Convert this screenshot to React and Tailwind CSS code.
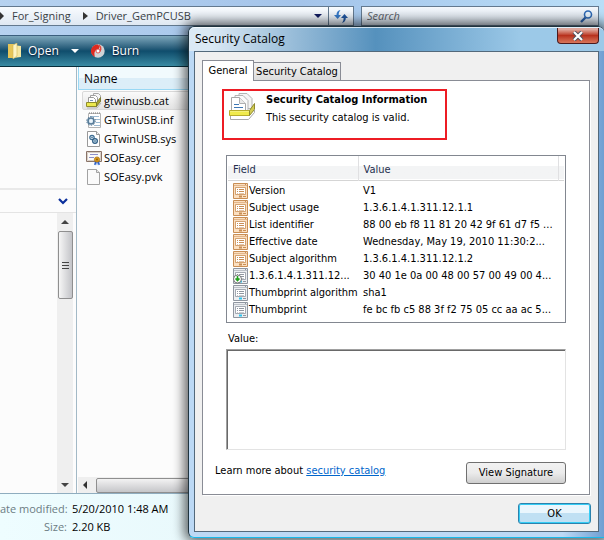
import React from "react";

const SEGOE = "font-['Open_Sans','Noto_Sans',sans-serif]";
const TAHOMA = "font-['DejaVu_Sans_Condensed','DejaVu_Sans',sans-serif]";

function CatalogIcon({ className }) {
  return (
    <svg viewBox="0 0 28 30" className={className} aria-hidden="true">
      <path d="M10 2.500h8l5 5v10H10z" fill="#f4f4f4" stroke="#b4b4b4" />
      <path d="M6 4.500h8l5 5v10H6z" fill="#fafafa" stroke="#b4b4b4" />
      <path d="M2.500 6.500h8l6 6v12h-14z" fill="#fff" stroke="#a8a8a8" />
      <path d="M10.500 6.500v6h6" fill="#e9e9e9" stroke="#b0b0b0" />
      <path d="M5 13.500h5M5 16.500h9" stroke="#3f78b5" />
      <path d="M.500 19.500h20v5H.500z" fill="#f4f07a" stroke="#b7ad2c" />
      <path d="M20.500 19.500l5-7v6l-5 6z" fill="#d2cb52" stroke="#8f8a2c" />
      <path d="M1 21h19v3H1z" fill="#f0ea4c" />
      <path d="M1.500 25v3.500h18l6-7v-3" fill="none" stroke="#a9a9a9" />
    </svg>
  );
}

function SmallCatalogIcon() {
  return (
    <svg viewBox="0 0 16 16" className="h-4 w-4" aria-hidden="true">
      <path d="M7.500.500h5l2 2v6h-7z" fill="#f6f6f6" stroke="#a8a8a8" />
      <path d="M4.500 2.500h5l2 2v6h-7z" fill="#fff" stroke="#a0a0a0" />
      <path d="M2.500 4.500h5l2 2v6h-7z" fill="#fff" stroke="#999" />
      <path d="M4 7.500h3" stroke="#7794b5" />
      <path d="M.500 9.500h10v4H.500z" fill="#ece94e" stroke="#8e8b2a" />
      <path d="M10.500 9.500l4-5v4l-4 5z" fill="#a5a22f" stroke="#77752a" strokeWidth=".8" />
      <path d="M1 15h10l4-5" fill="none" stroke="#b5b5b5" />
    </svg>
  );
}

function InfIcon() {
  return (
    <svg viewBox="0 0 16 16" className="h-4 w-4" aria-hidden="true">
      <path d="M2.500 1.500h12v14h-12z" fill="#fff" stroke="#b5b5b5" />
      <path d="M3 1h11" stroke="#777" strokeDasharray="1 1" />
      <path d="M4 4.500h9M9 7.500h5M10 10.500h4M8 13.500h6" stroke="#9dbbd3" />
      <circle cx="5" cy="9" r="3" fill="#dcebf5" stroke="#557a98" strokeWidth="1.600" />
      <circle cx="5" cy="9" r="4.300" fill="none" stroke="#557a98" strokeDasharray="1.400 1.300" />
      <circle cx="5" cy="9" r="1" fill="#f4f9fc" />
    </svg>
  );
}

function SysIcon() {
  return (
    <svg viewBox="0 0 16 16" className="h-4 w-4" aria-hidden="true">
      <path d="M1.500.500h9l3 3v12h-12z" fill="#fff" stroke="#999" />
      <path d="M10.500.500v3h3" fill="#eee" stroke="#999" />
      <circle cx="6" cy="6.500" r="2.200" fill="#d7e8f3" stroke="#3e6d92" strokeWidth="1.200" />
      <circle cx="9" cy="10" r="2.400" fill="#c3dbea" stroke="#315f85" strokeWidth="1.200" />
      <circle cx="6" cy="6.500" r=".8" fill="#3e6d92" />
      <circle cx="9" cy="10" r=".8" fill="#315f85" />
    </svg>
  );
}

function CerIcon() {
  return (
    <svg viewBox="0 0 16 16" className="h-4 w-4" aria-hidden="true">
      <path d="M.500 1.500h15v10H.500z" fill="#fff" stroke="#8a7468" />
      <path d="M1.500 2.500h13v8h-13z" fill="#fbfaf8" stroke="#d8cfc7" />
      <path d="M4 4.500h8M3 7.500h5" stroke="#8d8fc9" />
      <path d="M9 11l-1 4 1.500-.5.500 1 1-4 1 4 .5-1 1.500.5-1-4z" fill="#2d62c9" />
      <circle cx="11" cy="9.500" r="2.600" fill="#d99a1c" stroke="#a86c08" strokeWidth=".7" />
      <circle cx="11" cy="9.500" r=".9" fill="#8d5900" />
    </svg>
  );
}

function PlainIcon() {
  return (
    <svg viewBox="0 0 16 16" className="h-4 w-4" aria-hidden="true">
      <path d="M1.500.500h9l3 3v12h-12z" fill="#fafafa" stroke="#a2a2a2" />
      <path d="M10.500.500v3h3" fill="#e6e6e6" stroke="#a2a2a2" />
    </svg>
  );
}

function FieldIcon({ kind }) {
  const tan = kind === "v1";
  const line = tan ? "#c98e55" : "#9096a0";
  const pale = tan ? "#fbdfc0" : "#eceef1";
  return (
    <svg viewBox="0 0 15 16" className="h-4 w-[15px] shrink-0" aria-hidden="true">
      <path d="M.500.500h14v15H.500z" fill={pale} stroke={line} />
      <path d="M1 2.500h13" stroke={line} strokeOpacity=".5" />
      <path d="M12 1.500h1" stroke={line} />
      <path d="M2.500 4.500h10v7h-10z" fill="#fff" stroke={line} strokeOpacity=".8" />
      <path d="M4 6.500h1M6 6.500h5M4 8.500h1M6 8.500h5" stroke={line} />
      <path d="M4 10.500h1M6 10.500h5" stroke={line} strokeOpacity=".5" />
      <path d="M6 13.500h3" stroke={tan ? line : "#2cc4ee"} strokeWidth="2" />
      <path d="M10 13.500h3" stroke={line} />
      {kind === "ext" && (
        <g>
          <circle cx="4.500" cy="11" r="4" fill="#fff" stroke="#777" />
          <path d="M4.500 8v4.500M2.500 10.500l2 2 2-2" fill="none" stroke="#24a01e" strokeWidth="1.600" />
        </g>
      )}
    </svg>
  );
}

const files = [
  ["gtwinusb.cat", SmallCatalogIcon],
  ["GTwinUSB.inf", InfIcon],
  ["GTwinUSB.sys", SysIcon],
  ["SOEasy.cer", CerIcon],
  ["SOEasy.pvk", PlainIcon],
];

const fields = [
  ["v1", "Version", "V1"],
  ["v1", "Subject usage", "1.3.6.1.4.1.311.12.1.1"],
  ["v1", "List identifier", "88 00 eb f8 11 81 20 42 9f 61 d7 f5 ..."],
  ["v1", "Effective date", "Wednesday, May 19, 2010 11:30:2..."],
  ["v1", "Subject algorithm", "1.3.6.1.4.1.311.12.1.2"],
  ["ext", "1.3.6.1.4.1.311.12...", "30 40 1e 0a 00 48 00 57 00 49 00 4..."],
  ["prop", "Thumbprint algorithm", "sha1"],
  ["prop", "Thumbprint", "fe bc fb c5 88 3f f2 75 05 cc aa ac 5..."],
];

function AddressRow() {
  return (
    <div className="flex h-[35px] items-start gap-[7px] bg-linear-to-r from-[#b6d2f0] via-[#a4c4ea] to-[#b9def7] pt-[6px] pr-[5px] text-[11px]">
      <div className="flex h-5 w-[354px] items-center border border-l-0 border-[#63798f] bg-linear-to-b from-[#f8fbfe] to-[#dfe8f2] text-[#3a3f46]">
        <svg viewBox="0 0 4 8" className="h-2 w-1" aria-hidden="true"><path d="M0 0l4 4-4 4z" fill="#333" /></svg>
        <button className="ml-2 whitespace-nowrap">For_Signing</button>
        <svg viewBox="0 0 5 8" className="mr-2 ml-3 h-2 w-[5px]" aria-hidden="true"><path d="M0 0l5 4-5 4z" fill="#333" /></svg>
        <button className="whitespace-nowrap">Driver_GemPCUSB</button>
        <button aria-label="Previous locations" className="mr-[6px] ml-auto">
          <svg viewBox="0 0 8 4" className="h-1 w-2" aria-hidden="true"><path d="M0 0h8L4 4z" fill="#101c60" /></svg>
        </button>
        <button aria-label="Refresh" className="flex h-full w-[25px] items-center justify-center border-l border-[#63798f]">
          <svg viewBox="0 0 14 13" className="h-[13px] w-[14px]" aria-hidden="true">
            <path d="M6.500 0C4 .5 2.500 2 2.500 5H0l3.700 4L7 5H4.700C4.700 3 5.200 1.500 6.500 0z" fill="#3579c8" />
            <path d="M8 13c2.500-.5 3.800-2.500 3.800-5H14l-3.500-4L7 8h2.600c0 2-.4 3.500-1.600 5z" fill="#1f559f" />
          </svg>
        </button>
      </div>
      <label className="flex h-5 flex-1 items-center border border-[#63798f] bg-linear-to-b from-[#f4f8fc] to-[#d3dde8] pr-[5px]">
        <input aria-label="Search" placeholder="Search" className="w-full min-w-0 bg-transparent pl-[5px] italic outline-none placeholder:text-[#5a6068]" />
        <svg viewBox="0 0 13 13" className="h-[13px] w-[13px] shrink-0" aria-hidden="true">
          <circle cx="8" cy="4.500" r="3.500" fill="#e8f3fc" stroke="#2c68b4" strokeWidth="1.600" />
          <path d="M5.500 7.500L1 12" stroke="#2a5fa8" strokeWidth="2.400" />
        </svg>
      </label>
    </div>
  );
}

function Toolbar() {
  return (
    <div className="flex h-8 items-center border-t border-b border-t-[#3b5f7e] border-b-[#072c3a] bg-linear-to-b from-[#7fa9bd] from-0% via-[#0f4d6c] via-50% to-[#3a8ba3] to-100% pl-2 text-white">
      <button className="flex items-center [text-shadow:0_1px_2px_#002]">
        <svg viewBox="0 0 14 16" className="h-4 w-[14px]" aria-hidden="true">
          <path d="M0 1h6v14H0z" fill="#e6c558" />
          <path d="M5 2l8 1v11l-8 1z" fill="#f6e7a1" />
          <path d="M5 2l4-2v13l-4 3z" fill="#fdf4c4" stroke="#d4b650" strokeWidth=".6" />
        </svg>
        <span className="ml-[6px]">Open</span>
        <svg viewBox="0 0 8 4" className="ml-3 h-1 w-2" aria-hidden="true"><path d="M0 0h8L4 4z" fill="#fff" /></svg>
      </button>
      <button className="ml-3 flex items-center [text-shadow:0_1px_2px_#002]">
        <svg viewBox="0 0 14 14" className="h-[14px] w-[14px]" aria-hidden="true">
          <circle cx="7" cy="7" r="6.700" fill="#cfd3d6" />
          <path d="M7 .5A6.500 6.500 0 0 0 4 13C2.500 9 4 6 6 5.500 9 5 9 3 7 .5z" fill="#dd2a20" />
          <path d="M8 1c3 3 2 6-1 7" fill="none" stroke="#e4473b" strokeWidth="1.500" />
          <circle cx="7" cy="7" r="2" fill="#fff" stroke="#d33" strokeWidth=".8" />
        </svg>
        <span className="ml-[7px]">Burn</span>
      </button>
    </div>
  );
}

function FolderPane() {
  return (
    <div className="flex w-[77px] shrink-0 flex-col border-r border-[#a3b9c6] bg-[#fcfcfc]">
      <div className="h-[123px] border-b-2 border-[#e9e9e9]" />
      <button aria-label="Folders" className="flex h-[23px] items-center justify-end border-b border-[#e4e4e4] pr-2">
        <svg viewBox="0 0 10 7" className="h-[7px] w-[10px]" aria-hidden="true"><path d="M1 1l4 4 4-4" fill="none" stroke="#0b2f9c" strokeWidth="2.200" /></svg>
      </button>
      <div className="flex flex-1 justify-end pr-[3px]">
        <div className="flex w-4 flex-col items-center bg-[#efefef]">
          <div className="flex h-[18px] items-center">
            <svg viewBox="0 0 8 4" className="h-1 w-2" aria-hidden="true"><path d="M0 4h8L4 0z" fill="#444" /></svg>
          </div>
          <div className="flex h-[68px] w-[15px] flex-col items-center justify-center gap-[2px] rounded-xs border border-[#8f8f8f] bg-linear-to-r from-[#f6f6f6] to-[#c3c4c8]">
            <i className="h-px w-[7px] bg-[#444]" />
            <i className="h-px w-[7px] bg-[#444]" />
            <i className="h-px w-[7px] bg-[#444]" />
          </div>
          <svg viewBox="0 0 8 4" className="mt-auto mb-[6px] h-1 w-2" aria-hidden="true"><path d="M0 0h8L4 4z" fill="#444" /></svg>
        </div>
      </div>
    </div>
  );
}

function FileList() {
  return (
    <div className="flex min-w-0 flex-1 flex-col bg-[#fcfcfc] pl-px">
      <div className="flex h-[23px] items-center border-b border-l border-[#98d8f4] bg-linear-to-b from-[#f1fafd] from-50% to-[#dceef8] to-50% pt-[2px] pl-[5px]">Name</div>
      <ul className="pt-px pl-1 text-[11px]">
        {files.map(([name, Icon], i) => (
          <li
            key={name}
            className={
              "flex h-[19px] items-center gap-[2px] rounded-xs border pl-[3px] " +
              (i === 0 ? "border-[#d9d9d9] bg-linear-to-b from-[#fafafa] to-[#e4e4e4]" : "border-transparent")
            }
          >
            <Icon />
            <span>{name}</span>
          </li>
        ))}
      </ul>
      <div className="mt-auto flex h-4 items-center bg-[#efefef] pl-[5px]">
        <svg viewBox="0 0 4 8" className="h-2 w-1" aria-hidden="true"><path d="M4 0v8L0 4z" fill="#333" /></svg>
        <div className="ml-[9px] h-[15px] flex-1 rounded-xs border border-[#8f8f8f] bg-linear-to-b from-[#f3f3f3] to-[#c5c6c9]" />
      </div>
    </div>
  );
}

function Details() {
  return (
    <dl className="grid grid-cols-[67px_1fr] gap-x-[5px] border-t border-[#8fadbf] bg-linear-to-r from-[#eefdff] to-[#dff1f6] pt-[6px] pb-1 text-[11px] leading-[18px]">
      <dt className="text-right whitespace-nowrap text-[#6c7c84]">ate modified:</dt>
      <dd>5/20/2010 1:48 AM</dd>
      <dt className="text-right text-[#6c7c84]">Size:</dt>
      <dd>2.20 KB</dd>
    </dl>
  );
}

function FieldTable() {
  return (
    <div className="mt-[15px] border border-[#828790] bg-white px-px pb-1">
      <table className="w-full table-fixed border-collapse leading-[17px]">
        <colgroup>
          <col className="w-[130px]" />
          <col />
          <col className="w-[6px]" />
        </colgroup>
        <thead>
          <tr className="h-6 border-b border-[#d5d5d5] bg-linear-to-b from-white from-45% to-[#f3f4f5] to-45% text-left text-[#26304f]">
            <th className="border-r border-[#e0e0e2] pt-1 pl-[5px] font-normal">Field</th>
            <th className="border-r border-[#e0e0e2] pt-1 pl-[5px] font-normal">Value</th>
            <td />
          </tr>
        </thead>
        <tbody>
          <tr className="h-[2px]"><td colSpan={3} /></tr>
          {fields.map(([kind, name, value]) => (
            <tr key={name} className="h-[17px] whitespace-nowrap">
              <td className="p-0 pl-[5px]">
                <span className="flex items-center gap-px">
                  <FieldIcon kind={kind} />
                  {name}
                </span>
              </td>
              <td className="p-0 pl-[5px]" colSpan={2}>{value}</td>
            </tr>
          ))}
        </tbody>
      </table>
    </div>
  );
}

function Dialog() {
  return (
    <section
      aria-label="Security Catalog"
      className="absolute top-[26px] right-0 left-[188px] rounded-t-md rounded-bl-md border border-r-0 border-[#20343f] border-b-[#19b9e8] bg-linear-to-r from-[#bcd9f5] from-90% to-[#6f9fd2] pb-[5px] shadow-[0_0_12px_4px_rgba(0,0,0,0.6)]"
    >
      <header className="flex h-6 items-start justify-between rounded-t-md border-t border-white/70 bg-linear-to-r from-[#dbe9f4] from-5% via-[#5591bd] via-45% to-[#9cc9e8] to-80% pl-[6px] pr-[5px]">
        <h1 className={SEGOE + " text-[12px] leading-[22px] text-black"}>Security Catalog</h1>
        <button aria-label="Close" className="flex h-[16px] w-[42px] items-center justify-center rounded-b-[4px] border border-t-0 border-[#4b1a1d] bg-linear-to-b from-[#dfa79c] from-10% via-[#b8311d] via-50% to-[#d8755a]">
          <svg viewBox="0 0 12 10" className="h-[10px] w-3" aria-hidden="true">
            <path d="M2 1l8 8M10 1L2 9" stroke="#4a4f5c" strokeWidth="4" />
            <path d="M2 1l8 8M10 1L2 9" stroke="#fff" strokeWidth="2.200" />
          </svg>
        </button>
      </header>
      <div className="mr-[5px] ml-[5px] border border-[#53697b] bg-[#f0f0f0] pt-2 pr-[7px] pb-[7px] pl-[7px]">
        <div role="tablist" className="flex items-end">
          <button role="tab" aria-selected="true" className="relative z-10 -mb-px h-[21px] w-[52px] border border-b-0 border-[#898c95] bg-white">General</button>
          <button role="tab" aria-selected="false" className="h-[18px] w-[87px] border border-b-0 border-l-0 border-[#898c95] bg-linear-to-b from-[#f3f3f3] to-[#dcdcdc] whitespace-nowrap">Security Catalog</button>
        </div>
        <div role="tabpanel" className="mr-px border border-[#898c95] bg-white pt-2 pr-[23px] pb-[10px] pl-[23px] shadow-[1px_1px_0_#fff]">
          <div className="-ml-1 flex h-[51px] w-[225px] items-start border-2 border-[#ed1c24] pl-[5px]">
            <CatalogIcon className="h-[30px] w-7 shrink-0" />
            <div className="ml-[9px] whitespace-nowrap">
              <h2 className="font-bold leading-[18px]">Security Catalog Information</h2>
              <p className="leading-[18px]">This security catalog is valid.</p>
            </div>
          </div>
          <FieldTable />
          <label htmlFor="value" className="mt-2 block pl-[2px] leading-4">Value:</label>
          <textarea id="value" className="mt-[2px] block h-[101px] w-full resize-none border border-t-[#a0a0a0] border-r-[#e3e3e3] border-b-[#e3e3e3] border-l-[#a0a0a0] bg-white shadow-[inset_1px_1px_0_#696969] outline-none" />
          <div className="-ml-[11px] mt-3 flex items-center justify-between">
            <p className="-mt-1 whitespace-nowrap">
              Learn more about <a href="#catalog" className="text-[#0066cc] underline">security catalog</a>
            </p>
            <button className="h-[22px] w-[100px] rounded-[3px] border border-[#707070] bg-linear-to-b from-[#f2f2f2] from-0% via-[#ebebeb] via-50% to-[#cfcfcf] whitespace-nowrap">View Signature</button>
          </div>
        </div>
        <div className="mt-2 flex justify-end">
          <button className="h-[21px] w-[73px] rounded-[3px] border border-[#2c82ad] bg-linear-to-b from-[#eaf6fd] from-50% to-[#c0e0f3] to-50% shadow-[inset_0_0_0_1px_#35cdf5]">OK</button>
        </div>
      </div>
    </section>
  );
}

export default function App() {
  return (
    <main className={SEGOE + " relative flex min-h-screen flex-col overflow-hidden bg-[#dff1f6] text-[12px] leading-[16px] text-black"}>
      <AddressRow />
      <Toolbar />
      <div className="flex flex-1">
        <FolderPane />
        <FileList />
      </div>
      <Details />
      <div className={TAHOMA + " text-[11px] leading-[14px]"}>
        <Dialog />
      </div>
    </main>
  );
}
